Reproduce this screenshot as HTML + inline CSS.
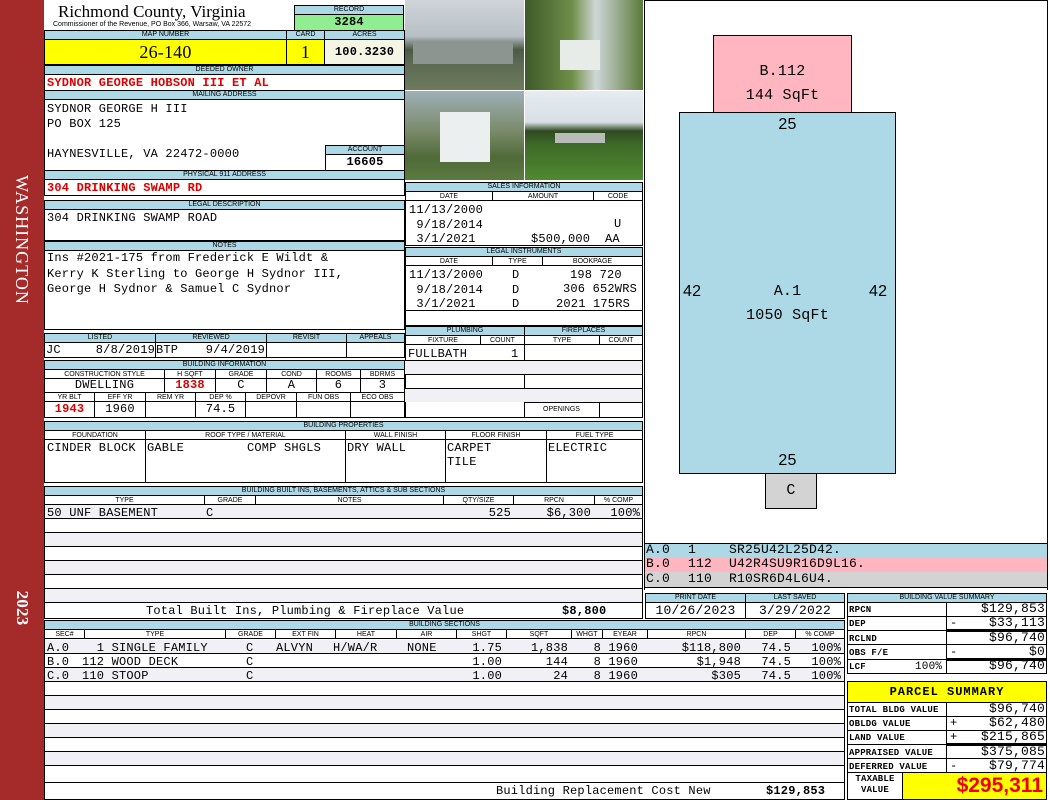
<!DOCTYPE html>
<html><head><meta charset="utf-8"><style>
*{margin:0;padding:0;box-sizing:border-box}
body{width:1050px;height:800px;position:relative;background:#fff;overflow:hidden;font-family:"Liberation Mono",monospace;font-size:12px;letter-spacing:.2px;color:#000}
div{position:absolute}
.b{border:1px solid #000;background:#fff}
.l{background:#add8e6;border:1px solid #000;font:7px/8px "Liberation Sans",sans-serif;letter-spacing:0;text-align:center;height:10px;white-space:nowrap;overflow:hidden}
.h{font:7px/9px "Liberation Sans",sans-serif;letter-spacing:0;text-align:center;border:1px solid #000;height:10px;background:#fff;white-space:nowrap;overflow:hidden}
.t{white-space:pre;line-height:14px}
.r{color:#d00;font-weight:bold}
.c{text-align:center}
.rt{text-align:right}
.g{background:#f0f0f5}
.hl{height:1px;background:#000}
.vl{width:1px;background:#000}
</style></head><body>
<!-- sidebar -->
<div style="left:0;top:0;width:44px;height:800px;background:#a52a2a"></div>
<div style="left:7px;top:155px;width:30px;height:170px;"><div style="left:-70px;top:70px;width:170px;height:30px;transform:rotate(90deg);color:#fff;font:18px/30px 'Liberation Serif',serif;text-align:center;letter-spacing:1px">WASHINGTON</div></div>
<div style="left:7px;top:588px;width:30px;height:40px;"><div style="left:-5px;top:5px;width:40px;height:30px;transform:rotate(90deg);color:#fff;font:bold 17px/30px 'Liberation Serif',serif;text-align:center">2023</div></div>

<!-- header -->
<div style="left:58px;top:2px;font:17px/20px 'Liberation Serif',serif;letter-spacing:0">Richmond County, Virginia</div>
<div style="left:53px;top:21px;font:7px/8px 'Liberation Sans',sans-serif;letter-spacing:0">Commissioner of the Revenue, PO Box 366, Warsaw, VA 22572</div>
<div class="l" style="left:294px;top:5px;width:110px">RECORD</div>
<div class="b c" style="left:294px;top:14px;width:110px;height:17px;background:#90ee90;font-weight:bold;font-size:12px;line-height:14px">3284</div>
<div class="l" style="left:44px;top:30px;width:243px">MAP NUMBER</div>
<div class="l" style="left:286px;top:30px;width:39px">CARD</div>
<div class="l" style="left:324px;top:30px;width:81px">ACRES</div>
<div class="b c" style="left:44px;top:39px;width:243px;height:26px;background:#ffff00;font:18px/24px 'Liberation Serif',serif">26-140</div>
<div class="b c" style="left:286px;top:39px;width:39px;height:26px;background:#ffff00;font:18px/24px 'Liberation Serif',serif">1</div>
<div class="b c" style="left:324px;top:39px;width:81px;height:26px;background:#f5f5e6;font-weight:bold;font-size:12px;line-height:24px">100.3230</div>
<div class="l" style="left:44px;top:65px;width:361px">DEEDED OWNER</div>
<div class="b" style="left:44px;top:74px;width:361px;height:17px"></div>
<div class="t r" style="left:47px;top:76px">SYDNOR GEORGE HOBSON III ET AL</div>
<div class="l" style="left:44px;top:90px;width:361px">MAILING ADDRESS</div>
<div class="b" style="left:44px;top:99px;width:361px;height:72px"></div>
<div class="t" style="left:47px;top:102px;line-height:15px">SYDNOR GEORGE H III
PO BOX 125

HAYNESVILLE, VA 22472-0000</div>
<div class="l" style="left:325px;top:145px;width:80px">ACCOUNT</div>
<div class="b c" style="left:325px;top:154px;width:80px;height:17px;font-weight:bold;font-size:12px;line-height:15px">16605</div>
<div class="l" style="left:44px;top:170px;width:361px">PHYSICAL 911 ADDRESS</div>
<div class="b" style="left:44px;top:179px;width:361px;height:17px"></div>
<div class="t r" style="left:47px;top:181px">304 DRINKING SWAMP RD</div>

<div class="l" style="left:44px;top:200px;width:361px">LEGAL DESCRIPTION</div>
<div class="b" style="left:44px;top:209px;width:361px;height:32px"></div>
<div class="t" style="left:47px;top:211px">304 DRINKING SWAMP ROAD</div>
<div class="l" style="left:44px;top:241px;width:361px">NOTES</div>
<div class="b" style="left:44px;top:250px;width:361px;height:80px"></div>
<div class="t" style="left:47px;top:251px;line-height:15.5px">Ins #2021-175 from Frederick E Wildt &amp;
Kerry K Sterling to George H Sydnor III,
George H Sydnor &amp; Samuel C Sydnor</div>

<!-- listed -->
<div class="l" style="left:44px;top:333px;width:112px">LISTED</div>
<div class="l" style="left:155px;top:333px;width:112px">REVIEWED</div>
<div class="l" style="left:266px;top:333px;width:81px">REVISIT</div>
<div class="l" style="left:346px;top:333px;width:59px">APPEALS</div>
<div class="b" style="left:44px;top:342px;width:112px;height:16px"></div>
<div class="b" style="left:155px;top:342px;width:112px;height:16px"></div>
<div class="b" style="left:266px;top:342px;width:81px;height:16px"></div>
<div class="b" style="left:346px;top:342px;width:59px;height:16px"></div>
<div class="t" style="left:46px;top:343px">JC</div>
<div class="t rt" style="left:80px;top:343px;width:75px">8/8/2019</div>
<div class="t" style="left:156px;top:343px">BTP</div>
<div class="t rt" style="left:190px;top:343px;width:75px">9/4/2019</div>

<div class="l" style="left:44px;top:360px;width:361px">BUILDING INFORMATION</div>
<div class="h" style="left:44px;top:369px;width:121px">CONSTRUCTION STYLE</div>
<div class="h" style="left:164px;top:369px;width:52px">H SQFT</div>
<div class="h" style="left:215px;top:369px;width:52px">GRADE</div>
<div class="h" style="left:266px;top:369px;width:51px">COND</div>
<div class="h" style="left:316px;top:369px;width:45px">ROOMS</div>
<div class="h" style="left:360px;top:369px;width:45px">BDRMS</div>
<div class="b c" style="left:44px;top:378px;width:121px;height:15px;line-height:13px">DWELLING</div>
<div class="b c r" style="left:164px;top:378px;width:52px;height:15px;line-height:13px">1838</div>
<div class="b c" style="left:215px;top:378px;width:52px;height:15px;line-height:13px">C</div>
<div class="b c" style="left:266px;top:378px;width:51px;height:15px;line-height:13px">A</div>
<div class="b c" style="left:316px;top:378px;width:45px;height:15px;line-height:13px">6</div>
<div class="b c" style="left:360px;top:378px;width:45px;height:15px;line-height:13px">3</div>
<div class="h" style="left:44px;top:392px;width:51px">YR BLT</div>
<div class="h" style="left:94px;top:392px;width:52px">EFF YR</div>
<div class="h" style="left:145px;top:392px;width:51px">REM YR</div>
<div class="h" style="left:195px;top:392px;width:51px">DEP %</div>
<div class="h" style="left:245px;top:392px;width:52px">DEPOVR</div>
<div class="h" style="left:296px;top:392px;width:55px">FUN OBS</div>
<div class="h" style="left:350px;top:392px;width:55px">ECO OBS</div>
<div class="b c r" style="left:44px;top:401px;width:51px;height:17px;line-height:15px">1943</div>
<div class="b c" style="left:94px;top:401px;width:52px;height:17px;line-height:15px">1960</div>
<div class="b" style="left:145px;top:401px;width:51px;height:17px"></div>
<div class="b c" style="left:195px;top:401px;width:51px;height:17px;line-height:15px">74.5</div>
<div class="b" style="left:245px;top:401px;width:52px;height:17px"></div>
<div class="b" style="left:296px;top:401px;width:55px;height:17px"></div>
<div class="b" style="left:350px;top:401px;width:55px;height:17px"></div>

<!-- photos -->
<div style="left:405px;top:0;width:119px;height:90px;background:linear-gradient(#cfd4d8 0,#b8c0c6 40%,#4d5a44 55%,#5b6a52 70%,#6d7a5c 100%)"></div>
<div style="left:413px;top:42px;width:100px;height:22px;background:#8d9590"></div>
<div style="left:525px;top:0;width:118px;height:90px;background:linear-gradient(90deg,#3e5a2a,#6f8e48 40%,#cfd7d8 60%,#5a7a3a)"></div>
<div style="left:560px;top:40px;width:40px;height:30px;background:#e8ece8"></div>
<div style="left:405px;top:91px;width:119px;height:89px;background:linear-gradient(#9fb0b8,#7a8a6a 45%,#4f6a38 75%,#5b7a40)"></div>
<div style="left:440px;top:112px;width:50px;height:50px;background:#eceff0"></div>
<div style="left:525px;top:91px;width:118px;height:89px;background:linear-gradient(#e6ecf0 0,#d8e0e6 35%,#304a20 45%,#3d6a28 60%,#4f8a30 100%)"></div>
<div style="left:555px;top:133px;width:50px;height:10px;background:#b8bcb8"></div>

<!-- sales -->
<div class="b" style="left:405px;top:182px;width:238px;height:64px"></div>
<div class="l" style="left:405px;top:182px;width:238px">SALES INFORMATION</div>
<div class="h" style="left:405px;top:191px;width:88px">DATE</div>
<div class="h" style="left:492px;top:191px;width:102px">AMOUNT</div>
<div class="h" style="left:593px;top:191px;width:50px">CODE</div>
<div class="t" style="left:409px;top:203px;line-height:14.5px">11/13/2000
 9/18/2014
 3/1/2021</div>
<div class="t" style="left:614px;top:217px">U</div>
<div class="t" style="left:531px;top:232px">$500,000</div>
<div class="t" style="left:605px;top:232px">AA</div>
<div class="b" style="left:405px;top:247px;width:238px;height:79px"></div>
<div class="l" style="left:405px;top:247px;width:238px">LEGAL INSTRUMENTS</div>
<div class="h" style="left:405px;top:256px;width:88px">DATE</div>
<div class="h" style="left:492px;top:256px;width:51px">TYPE</div>
<div class="h" style="left:542px;top:256px;width:101px">BOOKPAGE</div>
<div class="t" style="left:409px;top:268px;line-height:14.5px">11/13/2000
 9/18/2014
 3/1/2021</div>
<div class="t" style="left:512px;top:268px;line-height:14.5px">D
D
D</div>
<div class="t" style="left:570px;top:268px">198 720</div>
<div class="t" style="left:563px;top:282px">306 652WRS</div>
<div class="t" style="left:556px;top:297px">2021 175RS</div>
<div class="hl" style="left:406px;top:310px;width:236px"></div>

<!-- plumbing -->
<div class="b" style="left:405px;top:326px;width:120px;height:92px"></div>
<div class="b" style="left:524px;top:326px;width:119px;height:92px"></div>
<div class="l" style="left:405px;top:326px;width:120px">PLUMBING</div>
<div class="l" style="left:524px;top:326px;width:119px">FIREPLACES</div>
<div class="h" style="left:405px;top:335px;width:76px">FIXTURE</div>
<div class="h" style="left:480px;top:335px;width:45px">COUNT</div>
<div class="h" style="left:524px;top:335px;width:76px">TYPE</div>
<div class="h" style="left:599px;top:335px;width:44px">COUNT</div>
<div class="t" style="left:408px;top:347px">FULLBATH</div>
<div class="t" style="left:511px;top:347px">1</div>
<div class="hl" style="left:405px;top:360px;width:238px"></div>
<div class="hl" style="left:405px;top:374px;width:238px"></div>
<div class="hl" style="left:405px;top:388px;width:238px"></div>
<div class="hl" style="left:524px;top:402px;width:119px"></div>
<div style="left:405px;top:361px;width:120px;height:13px" class="g"></div>
<div style="left:525px;top:361px;width:117px;height:13px" class="g"></div>
<div style="left:405px;top:389px;width:120px;height:13px" class="g"></div>
<div style="left:525px;top:389px;width:117px;height:13px" class="g"></div>
<div style="left:524px;top:403px;width:75px;height:14px;font:7px/14px 'Liberation Sans',sans-serif;text-align:center;letter-spacing:0">OPENINGS</div>
<div class="vl" style="left:599px;top:402px;height:16px"></div>

<!-- building properties -->
<div class="b" style="left:44px;top:421px;width:599px;height:62px"></div>
<div class="l" style="left:44px;top:421px;width:599px">BUILDING PROPERTIES</div>
<div class="h" style="left:44px;top:430px;width:102px">FOUNDATION</div>
<div class="h" style="left:145px;top:430px;width:201px">ROOF TYPE / MATERIAL</div>
<div class="h" style="left:345px;top:430px;width:101px">WALL FINISH</div>
<div class="h" style="left:445px;top:430px;width:102px">FLOOR FINISH</div>
<div class="h" style="left:546px;top:430px;width:97px">FUEL TYPE</div>
<div class="vl" style="left:145px;top:430px;height:53px"></div>
<div class="vl" style="left:345px;top:430px;height:53px"></div>
<div class="vl" style="left:445px;top:430px;height:53px"></div>
<div class="vl" style="left:546px;top:430px;height:53px"></div>
<div class="t" style="left:47px;top:441px">CINDER BLOCK</div>
<div class="t" style="left:147px;top:441px">GABLE</div>
<div class="t" style="left:247px;top:441px">COMP SHGLS</div>
<div class="t" style="left:347px;top:441px">DRY WALL</div>
<div class="t" style="left:447px;top:441px;line-height:14px">CARPET
TILE</div>
<div class="t" style="left:548px;top:441px">ELECTRIC</div>

<!-- built-ins -->
<div class="b" style="left:44px;top:486px;width:599px;height:133px"></div>
<div class="l" style="left:44px;top:486px;width:599px">BUILDING BUILT INS, BASEMENTS, ATTICS &amp; SUB SECTIONS</div>
<div class="h" style="left:44px;top:495px;width:161px">TYPE</div>
<div class="h" style="left:204px;top:495px;width:52px">GRADE</div>
<div class="h" style="left:255px;top:495px;width:189px">NOTES</div>
<div class="h" style="left:443px;top:495px;width:71px">QTY/SIZE</div>
<div class="h" style="left:513px;top:495px;width:82px">RPCN</div>
<div class="h" style="left:594px;top:495px;width:49px">% COMP</div>
<div class="g" style="left:45px;top:505px;width:597px;height:13px"></div>
<div class="g" style="left:45px;top:533px;width:597px;height:13px"></div>
<div class="g" style="left:45px;top:561px;width:597px;height:13px"></div>
<div class="g" style="left:45px;top:589px;width:597px;height:13px"></div>
<div class="hl" style="left:44px;top:518px;width:599px"></div>
<div class="hl" style="left:44px;top:532px;width:599px"></div>
<div class="hl" style="left:44px;top:546px;width:599px"></div>
<div class="hl" style="left:44px;top:560px;width:599px"></div>
<div class="hl" style="left:44px;top:574px;width:599px"></div>
<div class="hl" style="left:44px;top:588px;width:599px"></div>
<div class="hl" style="left:44px;top:602px;width:599px"></div>
<div class="t" style="left:47px;top:506px">50 UNF BASEMENT</div>
<div class="t" style="left:206px;top:506px">C</div>
<div class="t rt" style="left:450px;top:506px;width:61px">525</div>
<div class="t rt" style="left:515px;top:506px;width:76px">$6,300</div>
<div class="t rt" style="left:596px;top:506px;width:44px">100%</div>
<div class="t" style="left:146px;top:604px">Total Built Ins, Plumbing &amp; Fireplace Value</div>
<div class="t" style="left:562px;top:604px;font-weight:bold">$8,800</div>

<!-- building sections -->
<div class="b" style="left:44px;top:620px;width:801px;height:180px"></div>
<div class="l" style="left:44px;top:620px;width:801px">BUILDING SECTIONS</div>
<div class="h" style="left:44px;top:629px;width:41px">SEC#</div>
<div class="h" style="left:84px;top:629px;width:142px">TYPE</div>
<div class="h" style="left:225px;top:629px;width:51px">GRADE</div>
<div class="h" style="left:275px;top:629px;width:61px">EXT FIN</div>
<div class="h" style="left:335px;top:629px;width:62px">HEAT</div>
<div class="h" style="left:396px;top:629px;width:61px">AIR</div>
<div class="h" style="left:456px;top:629px;width:51px">SHGT</div>
<div class="h" style="left:506px;top:629px;width:66px">SQFT</div>
<div class="h" style="left:571px;top:629px;width:32px">WHGT</div>
<div class="h" style="left:602px;top:629px;width:46px">EYEAR</div>
<div class="h" style="left:647px;top:629px;width:99px">RPCN</div>
<div class="h" style="left:745px;top:629px;width:51px">DEP</div>
<div class="h" style="left:795px;top:629px;width:50px">% COMP</div>
<div class="g" style="left:45px;top:640px;width:799px;height:13px"></div>
<div class="g" style="left:45px;top:668px;width:799px;height:13px"></div>
<div class="g" style="left:45px;top:696px;width:799px;height:13px"></div>
<div class="g" style="left:45px;top:724px;width:799px;height:13px"></div>
<div class="g" style="left:45px;top:752px;width:799px;height:13px"></div>
<div class="hl" style="left:44px;top:653px;width:801px"></div>
<div class="hl" style="left:44px;top:667px;width:801px"></div>
<div class="hl" style="left:44px;top:681px;width:801px"></div>
<div class="hl" style="left:44px;top:695px;width:801px"></div>
<div class="hl" style="left:44px;top:709px;width:801px"></div>
<div class="hl" style="left:44px;top:723px;width:801px"></div>
<div class="hl" style="left:44px;top:737px;width:801px"></div>
<div class="hl" style="left:44px;top:751px;width:801px"></div>
<div class="hl" style="left:44px;top:765px;width:801px"></div>
<div class="hl" style="left:44px;top:782px;width:801px"></div>
<div class="t" style="left:47px;top:641px">A.0
B.0
C.0</div>
<div class="t" style="left:82px;top:641px">  1 SINGLE FAMILY
112 WOOD DECK
110 STOOP</div>
<div class="t" style="left:246px;top:641px">C
C
C</div>
<div class="t" style="left:276px;top:641px">ALVYN</div>
<div class="t" style="left:333px;top:641px">H/WA/R</div>
<div class="t" style="left:407px;top:641px">NONE</div>
<div class="t rt" style="left:450px;top:641px;width:52px">1.75
1.00
1.00</div>
<div class="t rt" style="left:510px;top:641px;width:58px">1,838
144
24</div>
<div class="t rt" style="left:590px;top:641px;width:48px">8 1960
8 1960
8 1960</div>
<div class="t rt" style="left:660px;top:641px;width:81px">$118,800
$1,948
$305</div>
<div class="t rt" style="left:745px;top:641px;width:46px">74.5
74.5
74.5</div>
<div class="t rt" style="left:796px;top:641px;width:45px">100%
100%
100%</div>
<div class="t" style="left:496px;top:784px">Building Replacement Cost New</div>
<div class="t" style="left:766px;top:784px;font-weight:bold">$129,853</div>

<!-- sketch -->
<div class="vl" style="left:644px;top:0;height:590px"></div>
<div class="vl" style="left:1047px;top:0;height:590px"></div>
<div class="hl" style="left:644px;top:0;width:404px"></div>
<div style="left:713px;top:35px;width:139px;height:78px;background:#ffb6c1;border:1px solid #000"></div>
<div class="c" style="left:713px;top:60px;width:139px;font-size:15px;line-height:24px">B.112<br>144 SqFt</div>
<div style="left:679px;top:112px;width:217px;height:362px;background:#add8e6;border:1px solid #000"></div>
<div class="c" style="left:679px;top:115px;width:217px;font:16px/20px 'Liberation Sans',sans-serif">25</div>
<div class="c" style="left:679px;top:451px;width:217px;font:16px/20px 'Liberation Sans',sans-serif">25</div>
<div style="left:683px;top:282px;font:16px/20px 'Liberation Sans',sans-serif">42</div>
<div style="left:869px;top:282px;font:16px/20px 'Liberation Sans',sans-serif">42</div>
<div class="c" style="left:679px;top:280px;width:217px;font-size:15px;line-height:24px">A.1<br>1050 SqFt</div>
<div style="left:765px;top:473px;width:52px;height:36px;background:#d3d3d3;border:1px solid #000;font:15px/34px 'Liberation Mono';text-align:center">C</div>
<div class="hl" style="left:644px;top:543px;width:404px"></div>
<div style="left:645px;top:544px;width:402px;height:14px;background:#add8e6"></div>
<div style="left:645px;top:558px;width:402px;height:14px;background:#ffb6c1"></div>
<div style="left:645px;top:572px;width:402px;height:15px;background:#d3d3d3"></div>
<div class="t" style="left:646px;top:543px;font-size:13px;line-height:14.3px">A.0
B.0
C.0</div>
<div class="t" style="left:688px;top:543px;font-size:13px;line-height:14.3px">1
112
110</div>
<div class="t" style="left:729px;top:543px;font-size:13px;line-height:14.3px">SR25U42L25D42.
U42R4SU9R16D9L16.
R10SR6D4L6U4.</div>
<div class="hl" style="left:644px;top:587px;width:404px"></div>

<!-- print date -->
<div class="l" style="left:645px;top:593px;width:101px">PRINT DATE</div>
<div class="l" style="left:745px;top:593px;width:100px">LAST SAVED</div>
<div class="b c" style="left:645px;top:602px;width:101px;height:17px;line-height:15px;font-size:13px">10/26/2023</div>
<div class="b c" style="left:745px;top:602px;width:100px;height:17px;line-height:15px;font-size:13px">3/29/2022</div>

<!-- value summary -->
<div class="l" style="left:847px;top:593px;width:200px">BUILDING VALUE SUMMARY</div>
<div class="b" style="left:847px;top:602px;width:100px;height:72px"></div>
<div class="b" style="left:946px;top:602px;width:101px;height:72px"></div>
<div class="hl" style="left:847px;top:616px;width:200px"></div>
<div class="hl" style="left:847px;top:630px;width:200px"></div>
<div class="hl" style="left:847px;top:644px;width:200px"></div>
<div class="hl" style="left:847px;top:659px;width:200px"></div>
<div style="left:947px;top:629px;width:100px;height:3px;background:#000"></div>
<div style="left:947px;top:658px;width:100px;height:3px;background:#000"></div>
<div class="t" style="left:849px;top:603px;font-size:9px;line-height:14.3px;font-weight:bold">RPCN
DEP
RCLND
OBS F/E
LCF</div>
<div class="t" style="left:915px;top:660px;font-size:11px">100%</div>
<div class="t rt" style="left:948px;top:602px;width:97px;line-height:14.3px;font-size:13px">$129,853
$33,113
$96,740
$0
$96,740</div>
<div class="t" style="left:950px;top:616px">-</div>
<div class="t" style="left:950px;top:645px">-</div>

<!-- parcel summary -->
<div class="b c" style="left:847px;top:681px;width:200px;height:22px;background:#ffff00;font-weight:bold;font-size:12px;line-height:20px;letter-spacing:1px">PARCEL SUMMARY</div>
<div class="b" style="left:847px;top:702px;width:100px;height:71px"></div>
<div class="b" style="left:946px;top:702px;width:101px;height:71px"></div>
<div class="hl" style="left:847px;top:716px;width:200px"></div>
<div class="hl" style="left:847px;top:730px;width:200px"></div>
<div class="hl" style="left:847px;top:744px;width:200px"></div>
<div class="hl" style="left:847px;top:758px;width:200px"></div>
<div style="left:947px;top:743px;width:100px;height:3px;background:#000"></div>
<div class="t" style="left:849px;top:703px;font-size:9px;line-height:14.2px;font-weight:bold">TOTAL BLDG VALUE
OBLDG VALUE
LAND VALUE
APPRAISED VALUE
DEFERRED VALUE</div>
<div class="t rt" style="left:948px;top:702px;width:97px;line-height:14.2px;font-size:13px">$96,740
$62,480
$215,865
$375,085
$79,774</div>
<div class="t" style="left:950px;top:716px;line-height:14.2px">+
+

-</div>
<div class="b" style="left:847px;top:772px;width:56px;height:28px"></div>
<div class="c" style="left:847px;top:774px;width:56px;font-size:9px;line-height:11px;font-weight:bold">TAXABLE<br>VALUE</div>
<div class="b rt" style="left:902px;top:772px;width:145px;height:28px;background:#ffff00;color:#e00;font:bold 21px/26px 'Liberation Sans',sans-serif;padding-right:3px;letter-spacing:0">$295,311</div>
</body></html>
